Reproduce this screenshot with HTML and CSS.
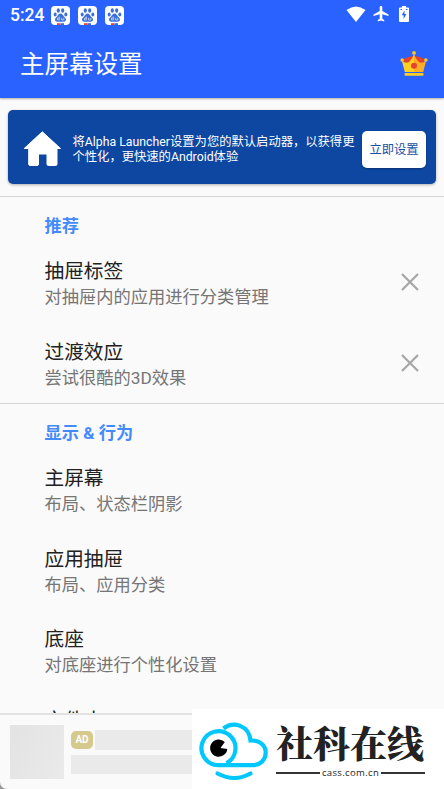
FILE: index.html
```html
<!DOCTYPE html>
<html lang="zh-CN">
<head>
<meta charset="utf-8">
<title>主屏幕设置</title>
<link rel="stylesheet" href="styles.css">
</head>
<body>
<svg class="defs" aria-hidden="true">
  <symbol id="paw" viewBox="0 0 19 19">
    <rect width="19" height="19" rx="4" fill="#fff"/>
    <g fill="#3c6fd8">
      <ellipse cx="7.3" cy="4.5" rx="1.6" ry="2.2"/>
      <ellipse cx="11.7" cy="4.5" rx="1.6" ry="2.2"/>
      <ellipse cx="4.2" cy="8.400" rx="1.500" ry="2"/>
      <ellipse cx="14.8" cy="8.400" rx="1.500" ry="2"/>
      <path d="M9.5 7.600c1.700 0 2.200 1.600 3.400 2.800 1.500 1.300 2.400 2.200 2 3.800-.4 1.800-2.800 1.500-5.400 1.500s-5 .3-5.400-1.500c-.4-1.600.5-2.500 2-3.800C7.300 9.200 7.800 7.600 9.500 7.600z"/>
    </g>
    <path d="M8.300 10.500v3.500H6.500v-2h1.800M10.600 11.800v2.200h2.200v-2.200" fill="none" stroke="#fff" stroke-width=".6"/>
    <path d="M6 17.200h3.500V19H6z" fill="#e04444"/>
    <path d="M9.500 17.200H13V19H9.500z" fill="#3c6fd8"/>
  </symbol>
  <symbol id="close" viewBox="0 0 18 18">
    <path d="M1 1l16 16M17 1L1 17" stroke="#a6a6a6" stroke-width="2.200"/>
  </symbol>
</svg>
<div class="screen">
  <header class="appbar">
    <div class="status">
      <span class="clock">5:24</span>
      <svg class="paw"><use href="#paw"/></svg>
      <svg class="paw"><use href="#paw"/></svg>
      <svg class="paw"><use href="#paw"/></svg>
      <span class="spacer"></span>
      <svg width="20" height="16" viewBox="0 0 20 16"><path d="M.5 4Q10-3.200 19.500 4L10 16z" fill="#fff"/></svg>
      <svg class="plane" width="16" height="16" viewBox="0 0 16 16"><path d="M15.500 10V8.600L9.300 4.900V1.300a1.300 1.300 0 0 0-2.600 0v3.600L.5 8.600V10l6.200-1.800v4.500l-1.900 1.400v1.300L8 14.600l3.200.8v-1.300l-1.900-1.400V8.200z" fill="#fff"/></svg>
      <svg class="battery" width="10" height="16" viewBox="0 0 10 16"><path d="M3 0h4v1.500h2q1 0 1 1V15q0 1-1 1H1q-1 0-1-1V2.500q0-1 1-1h2z" fill="#fff"/><path d="M5.500 4.500L2.700 9.300h1.900v3.800l2.800-5H5.500z" fill="#2962ff"/><path d="M1.500 3.500h1.500M7 3.500h1.500" stroke="#2962ff"/></svg>
    </div>
    <div class="titlebar">
      <h1>主屏幕设置</h1>
      <svg width="28" height="26" viewBox="0 0 28 26">
        <path d="M3.500 9C7 4 21 4 24.500 9L20 19H8z" fill="#e5432d"/>
        <path d="M1.800 9.500Q6.500 13.500 9.500 10.500Q12.500 8 14 3V21H4.800z" fill="#ffd021"/>
        <path d="M26.200 9.500Q21.500 13.500 18.500 10.500Q15.500 8 14 3V21h9.200z" fill="#ffad26"/>
        <circle cx="14" cy="14.700" r="3" fill="#e5432d"/>
        <g fill="#ffc61e"><circle cx="14" cy="1.900" r="1.900"/><circle cx="2.200" cy="9" r="1.800"/><circle cx="25.800" cy="9" r="1.800"/></g>
        <rect x="4.500" y="22" width="19" height="2.800" rx="1" fill="#ffce20"/>
      </svg>
    </div>
  </header>

  <section class="banner">
    <svg width="38" height="36" viewBox="0 0 38 36"><path d="M19.300 .8L37.500 17.500H34V33Q34 34.500 32.500 34.500H25.500Q24 34.500 24 33V23H15.500V33Q15.500 34.500 14 34.500H7.200Q5.700 34.500 5.700 33V17.500H1.200z" fill="#fff" stroke="#fff" stroke-width="1" stroke-linejoin="round"/></svg>
    <p>将Alpha Launcher设置为您的默认启动器，以获得更<br>个性化，更快速的Android体验</p>
    <button class="action">立即设置</button>
  </section>

  <section class="group first">
    <h2>推荐</h2>
    <div class="row"><div><h3>抽屉标签</h3><p>对抽屉内的应用进行分类管理</p></div><svg class="close"><use href="#close"/></svg></div>
    <div class="row"><div><h3>过渡效应</h3><p>尝试很酷的3D效果</p></div><svg class="close"><use href="#close"/></svg></div>
  </section>
  <section class="group">
    <h2>显示 &amp; 行为</h2>
    <div class="row"><div><h3>主屏幕</h3><p>布局、状态栏阴影</p></div></div>
    <div class="row"><div><h3>应用抽屉</h3><p>布局、应用分类</p></div></div>
    <div class="row"><div><h3>底座</h3><p>对底座进行个性化设置</p></div></div>
    <div class="row"><div><h3>文件夹</h3></div></div>
  </section>

  <aside class="ad">
    <div class="thumb"></div>
    <div class="lines">
      <div class="line"><span class="tag">AD</span><span class="bar top"></span></div>
      <span class="bar bottom"></span>
    </div>
  </aside>

  <div class="brand">
    <svg width="84" height="80" viewBox="0 0 84 80">
      <g fill="none" stroke="#00c8ff" stroke-width="4.200">
        <path d="M34.500 54.200A17 17 0 1 0 26.700 56.200H60.500C68.500 56.200 73.700 50.500 73.700 43.700C73.700 36 67.500 31 58.500 31.500C57 16.500 41.500 11.500 31.500 19.500"/>
        <path d="M25.500 64.500Q42.500 73.500 58.500 64.500" stroke-linecap="round"/>
      </g>
      <path d="M28.500 39L32.800 33A8.600 8.600 0 1 0 35.300 40z" fill="#000"/>
    </svg>
    <div class="wordmark">
      <div class="name">社科在线</div>
      <div class="domain"><i></i><span>cass.com.cn</span><i></i></div>
    </div>
  </div>
</div>
</body>
</html>
```
FILE: styles.css
```css
* { box-sizing: border-box; margin: 0; padding: 0; }
body { font-family: Roboto, "Noto Sans CJK SC", sans-serif; background: #fafafa; overflow: hidden; }
.defs { position: absolute; width: 0; height: 0; }
.screen { position: relative; width: 444px; height: 789px; overflow: hidden; background: #fafafa; }

.appbar { height: 98px; background: #2962ff; color: #fff; box-shadow: 0 1px 2px rgba(0, 0, 0, .3); }
.status { display: flex; align-items: center; height: 30px; padding: 0 34px 0 10px; }
.clock { width: 41px; font-size: 17.5px; font-weight: 500; line-height: 30px; }
.paw { width: 19px; height: 19px; margin-right: 8px; }
.spacer { flex: 1; }
.status > svg:nth-of-type(n+4) { position: relative; left: -1px; top: -1px; }
.plane { margin-left: 7px; }
.battery { margin-left: 10px; }
.titlebar { display: flex; align-items: center; justify-content: space-between; height: 68px; padding: 0 16px 0 20px; }
.titlebar h1 { padding-top: 2px; font-size: 24.500px; font-weight: 400; line-height: 36px; }

.banner { display: flex; align-items: center; height: 74px; margin: 12px 8px; padding: 0 10px 0 15px; border-radius: 5px; background: #0d47a1; box-shadow: 0 1px 3px rgba(0, 0, 0, .3); color: #fff; }
.banner p { flex: 1; margin: 6px 0 0 11.500px; font-size: 12.300px; line-height: 15px; white-space: nowrap; }
.banner > svg { margin-top: 3px; }
.action { width: 64px; height: 37px; margin-top: 4px; border: 0; border-radius: 5px; background: #fff; color: #174ea6; font: 12.300px/39px Roboto, "Noto Sans CJK SC", sans-serif; box-shadow: 0 1px 2px rgba(0, 0, 0, .3); }

.group { border-top: 1px solid #d6d6d6; padding: 17px 0 0 44.500px; }
.group.first { height: 207px; }
.group h2 { height: 28px; font-size: 17.200px; font-weight: 700; line-height: 25px; color: #448aff; }
.row { display: flex; align-items: flex-start; justify-content: space-between; height: 80.500px; padding: 16px 25.500px 0 0; }
.row h3 { height: 27px; font-size: 19.700px; font-weight: 400; line-height: 28px; color: #212121; }
.row p { height: 24px; font-size: 17.250px; line-height: 24px; color: #757575; }
.close { width: 18px; height: 18px; margin-top: 15px; }

.ad { position: absolute; left: 0; bottom: 0; display: flex; gap: 7px; width: 444px; height: 76px; padding: 10px 0 0 10px; border-top: 2px solid #e2e2e2; border-bottom-left-radius: 7px; background: #fafafa; box-shadow: 0 0 0 8px #999; clip-path: inset(0); }
.thumb { width: 54px; height: 54px; background: linear-gradient(110deg, #e3e3e3, #eaeaea); }
.lines { flex: 1; padding-top: 5px; }
.line { display: flex; align-items: center; gap: 2px; height: 20px; }
.tag { width: 22px; height: 18px; border-radius: 5px; background: #d5c98c; color: #fff; font-size: 10px; font-weight: 700; line-height: 18px; text-align: center; }
.bar { display: block; background: #eaeaea; }
.bar.top { flex: 1; height: 20px; }
.bar.bottom { height: 19px; margin-top: 5px; }

.brand { position: absolute; right: 0; bottom: 0; display: flex; width: 252px; height: 80px; background: #fff; }
.brand svg { flex: none; }
.wordmark { width: 149px; padding-top: 14px; color: #222; }
.name { height: 43px; font-family: "Noto Serif CJK SC", "Noto Sans CJK SC", serif; font-size: 37px; font-weight: 900; line-height: 38px; white-space: nowrap; }
.domain { display: flex; align-items: center; gap: 2px; height: 14px; }
.domain i { flex: 1; height: 2px; background: #333; }
.domain span { font: 500 9.500px/14px "Open Sans", sans-serif; letter-spacing: .35px; }
```
